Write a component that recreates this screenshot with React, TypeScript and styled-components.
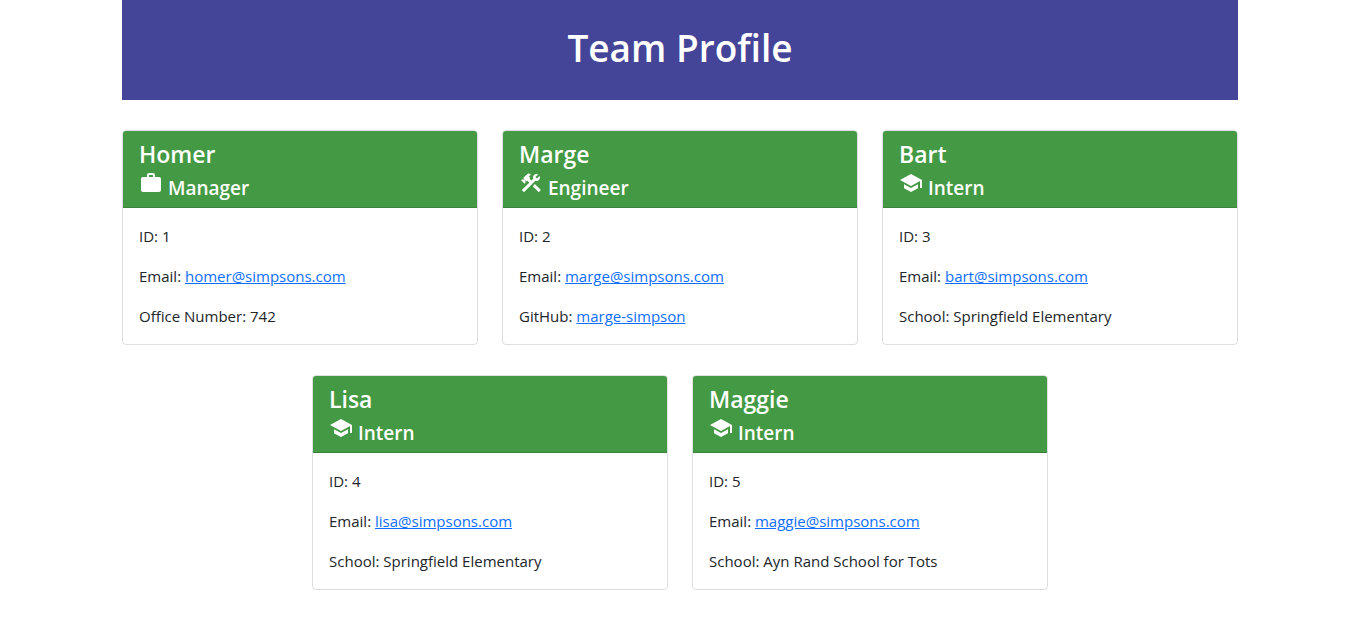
import React from "react";
import styled, { createGlobalStyle } from "styled-components";
import { MdConstruction, MdSchool, MdWork } from "react-icons/md";

const GlobalStyle = createGlobalStyle`
  *, *::before, *::after { box-sizing: border-box; }
  body {
    margin: 0;
    background: #fff;
    color: #212529;
    font-family: "Segoe UI", "Open Sans", "Noto Sans", sans-serif;
    font-size: 15px;
    line-height: 24px;
  }
`;

const Container = styled.div`
  width: 100%;
  max-width: 1140px;
  margin: 0 auto;
  padding: 0 12px 30px;
`;

const Banner = styled.header`
  padding: 24px 12px 28px;
  background: #444499;
  color: #fff;
  text-align: center;
`;

const Title = styled.h1`
  margin: 0;
  font-size: 37px;
  font-weight: 600;
  line-height: 48px;
`;

const Team = styled.main`
  display: flex;
  flex-wrap: wrap;
  justify-content: center;
  gap: 30px 24px;
  margin-top: 30px;
`;

const Card = styled.article`
  flex: 0 0 calc((100% - 48px) / 3);
  border: 1px solid rgba(0, 0, 0, 0.125);
  border-radius: 4px;
  overflow: hidden;

  @media (max-width: 767px) {
    flex-basis: 100%;
  }
`;

const CardHeader = styled.header`
  padding: 8px 16px;
  border-bottom: 1px solid rgba(0, 0, 0, 0.125);
  background: #449944;
  color: #fff;
`;

const Name = styled.h2`
  margin: 0 0 2px;
  font-size: 23px;
  font-weight: 600;
  line-height: 30px;
`;

const Role = styled.h3`
  margin: 0;
  font-size: 19px;
  font-weight: 600;
  line-height: 22px;
  height: 28px;

  svg {
    width: 24px;
    height: 24px;
    vertical-align: baseline;
  }
`;

const CardBody = styled.div`
  display: grid;
  gap: 16px;
  padding: 16px;
`;

const Line = styled.p`
  margin: 0;
`;

const Link = styled.a`
  color: #0d6efd;
  text-decoration: underline;
`;

const icons = { Manager: MdWork, Engineer: MdConstruction, Intern: MdSchool };

type Member = {
  id: number;
  name: string;
  role: keyof typeof icons;
  email: string;
  label: string;
  value: string;
  href?: string;
};

const members: Member[] = [
  { id: 1, name: "Homer", role: "Manager", email: "homer@simpsons.com", label: "Office Number", value: "742" },
  { id: 2, name: "Marge", role: "Engineer", email: "marge@simpsons.com", label: "GitHub", value: "marge-simpson", href: "https://github.com/marge-simpson" },
  { id: 3, name: "Bart", role: "Intern", email: "bart@simpsons.com", label: "School", value: "Springfield Elementary" },
  { id: 4, name: "Lisa", role: "Intern", email: "lisa@simpsons.com", label: "School", value: "Springfield Elementary" },
  { id: 5, name: "Maggie", role: "Intern", email: "maggie@simpsons.com", label: "School", value: "Ayn Rand School for Tots" },
];

function MemberCard({ member }: { member: Member }) {
  const Icon = icons[member.role];
  return (
    <Card>
      <CardHeader>
        <Name>{member.name}</Name>
        <Role>
          <Icon aria-hidden="true" /> {member.role}
        </Role>
      </CardHeader>
      <CardBody>
        <Line>ID: {member.id}</Line>
        <Line>
          Email: <Link href={`mailto:${member.email}`}>{member.email}</Link>
        </Line>
        <Line>
          {member.label}: {member.href ? <Link href={member.href}>{member.value}</Link> : member.value}
        </Line>
      </CardBody>
    </Card>
  );
}

export default function App() {
  return (
    <>
      <GlobalStyle />
      <Container>
        <Banner>
          <Title>Team Profile</Title>
        </Banner>
        <Team>
          {members.map((member) => (
            <MemberCard key={member.id} member={member} />
          ))}
        </Team>
      </Container>
    </>
  );
}
